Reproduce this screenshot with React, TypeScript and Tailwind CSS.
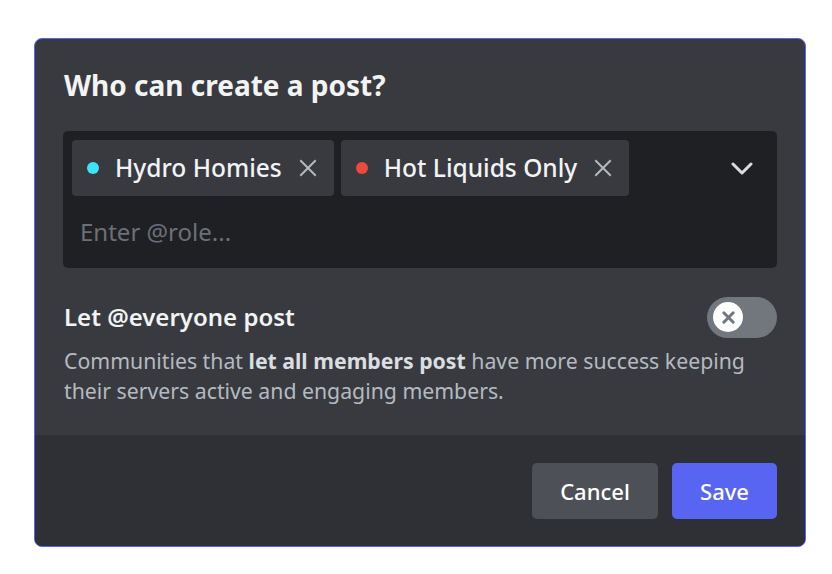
import React from "react";

function XIcon({ className }: { className?: string }) {
  return (
    <svg viewBox="0 0 18 18" className={className} fill="none" stroke="currentColor" strokeWidth="2" strokeLinecap="square">
      <path d="M2 2 L16 16 M16 2 L2 16" />
    </svg>
  );
}

function Chip({ color, label }: { color: string; label: string }) {
  return (
    <div className="flex h-[56px] items-center rounded-[4px] bg-[#383a40] pl-[15px] pr-[17px]">
      <span className={`h-[12px] w-[12px] rounded-full ${color}`} />
      <span className="ml-[16px] text-[24.5px] font-medium leading-none text-[#f2f3f5]">{label}</span>
      <XIcon className="ml-[17px] h-[18px] w-[18px] text-[#b5bac1]" />
    </div>
  );
}

export default function App() {
  return (
    <div className="min-h-screen bg-white pl-[34px] pt-[38px]" style={{ fontFamily: '"Noto Sans", "Open Sans", sans-serif' }}>
      <div className="w-[772px] overflow-hidden rounded-[8px] border border-[#5865f2] bg-[#383a40]">
        <div className="px-[28px] pb-[29px] pt-[28px]">
          <h1 className="ml-[1px] text-[28px] font-bold leading-[36px] text-[#f2f3f5]">Who can create a post?</h1>
          <div className="mt-[28px] rounded-[5px] bg-[#1f2023] px-[9px] pt-[9px]">
            <div className="flex items-center gap-[7px]">
              <Chip color="bg-[#3ee3f8]" label="Hydro Homies" />
              <Chip color="bg-[#ed4a3e]" label="Hot Liquids Only" />
              <div className="flex-1" />
              <svg viewBox="0 0 22 13" className="mr-[15px] h-[13px] w-[22px] text-[#dbdee1]" fill="none" stroke="currentColor" strokeWidth="3" strokeLinecap="round" strokeLinejoin="round">
                <path d="M2 2 L11 11 L20 2" />
              </svg>
            </div>
            <div className="flex h-[72px] items-center pl-[8px] text-[24px] text-[#6d6f78]">Enter @role...</div>
          </div>
          <div className="ml-[1px] mt-[28px] flex h-[42px] items-center justify-between">
            <span className="text-[24px] font-semibold text-[#f2f3f5]">Let @everyone post</span>
            <div className="flex h-[41px] w-[70px] items-center rounded-full bg-[#72767d] pl-[6px]">
              <div className="flex h-[30px] w-[30px] items-center justify-center rounded-full bg-white">
                <svg viewBox="0 0 16 16" className="h-[15px] w-[15px] text-[#72767d]" fill="none" stroke="currentColor" strokeWidth="3.2" strokeLinecap="round">
                  <path d="M3 3 L13 13 M13 3 L3 13" />
                </svg>
              </div>
            </div>
          </div>
          <p className="ml-[1px] mt-[8px] pr-[20px] text-[21.25px] leading-[30px] text-[#b5bac1]">
            Communities that <span className="font-bold text-[#dbdee1]">let all members post</span> have more success keeping their servers active and engaging members.
          </p>
        </div>
        <div className="flex justify-end gap-[14px] bg-[#2e3035] pb-[27px] pr-[28px] pt-[28px]">
          <button className="h-[56px] w-[126px] rounded-[5px] bg-[#4e5058] text-[22px] font-medium text-white">Cancel</button>
          <button className="h-[56px] w-[105px] rounded-[5px] bg-[#5865f2] text-[22px] font-medium text-white">Save</button>
        </div>
      </div>
    </div>
  );
}
